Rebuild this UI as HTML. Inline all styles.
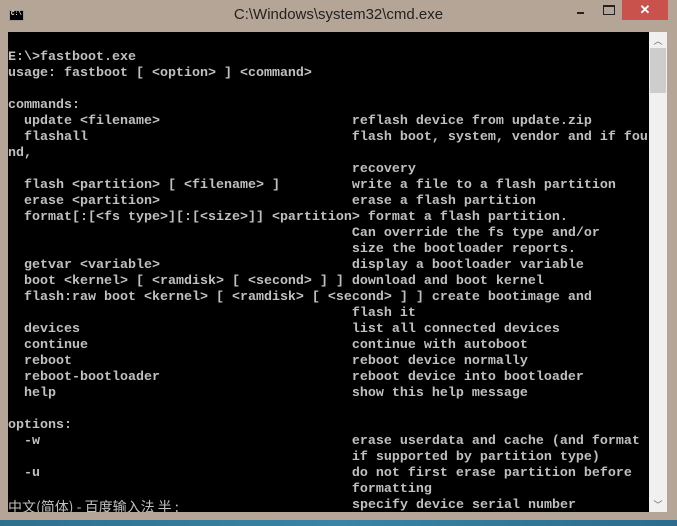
<!DOCTYPE html>
<html><head><meta charset="utf-8"><style>
html,body{margin:0;padding:0;width:677px;height:526px;overflow:hidden;background:#b5a596;}
.title{position:absolute;left:0;top:0;width:677px;height:32px;background:#b5a596;}
.ttl{position:absolute;left:0;width:677px;top:6px;text-align:center;font:15px "Liberation Sans",sans-serif;color:#222;}
.ico{position:absolute;left:9px;top:10px;width:15px;height:11px;background:#000;border:1px solid #999;box-sizing:border-box;}
.ico:after{content:"C:\\";position:absolute;left:1px;top:-1px;font:bold 6px "Liberation Mono",monospace;color:#fff;}
.close{position:absolute;left:622px;top:0;width:46px;height:20px;background:#c9524c;color:#fff;font:bold 13px "Liberation Sans",sans-serif;text-align:center;line-height:20px;}
.min{position:absolute;left:577px;top:12px;width:7px;height:2px;background:#222;}
.max{position:absolute;left:603px;top:5px;width:10px;height:7px;border:1px solid #222;border-top-width:2px;}
.con{position:absolute;left:8px;top:32px;width:641px;height:480px;background:#000;overflow:hidden;}
pre{margin:0;padding-top:2px;font:bold 13.33px/16px "Liberation Mono","Noto Sans CJK SC",monospace;color:#c0c0c0;letter-spacing:0;}
.sb{position:absolute;left:649px;top:32px;width:18px;height:480px;background:#f0f0f0;}
.thumb{position:absolute;left:1px;top:16px;width:16px;height:45px;background:#cdcdcd;}
.up,.dn{position:absolute;left:0;width:18px;text-align:center;font:9px "Liberation Sans",sans-serif;color:#666;}
.up{top:2px}.dn{top:466px}
.desk{position:absolute;left:0;top:520px;width:677px;height:6px;background:linear-gradient(90deg,#2f6f8e,#3a84a6,#2c6b8b);}
.ime{display:inline-block;width:344px;height:16px;line-height:16px;vertical-align:top;overflow:hidden;font-weight:normal;font-family:"Noto Sans CJK SC",sans-serif;font-size:14px;position:relative;top:1px;}
</style></head><body>
<div class="title"><div class="ico"></div><div class="ttl">C:\Windows\system32\cmd.exe</div>
<div class="min"></div><div class="max"></div><div class="close">✕</div></div>
<div class="con"><pre>

E:\&gt;fastboot.exe
usage: fastboot [ &lt;option&gt; ] &lt;command&gt;

commands:
  update &lt;filename&gt;                        reflash device from update.zip
  flashall                                 flash boot, system, vendor and if fou
nd,
                                           recovery
  flash &lt;partition&gt; [ &lt;filename&gt; ]         write a file to a flash partition
  erase &lt;partition&gt;                        erase a flash partition
  format[:[&lt;fs type&gt;][:[&lt;size&gt;]] &lt;partition&gt; format a flash partition.
                                           Can override the fs type and/or
                                           size the bootloader reports.
  getvar &lt;variable&gt;                        display a bootloader variable
  boot &lt;kernel&gt; [ &lt;ramdisk&gt; [ &lt;second&gt; ] ] download and boot kernel
  flash:raw boot &lt;kernel&gt; [ &lt;ramdisk&gt; [ &lt;second&gt; ] ] create bootimage and
                                           flash it
  devices                                  list all connected devices
  continue                                 continue with autoboot
  reboot                                   reboot device normally
  reboot-bootloader                        reboot device into bootloader
  help                                     show this help message

options:
  -w                                       erase userdata and cache (and format
                                           if supported by partition type)
  -u                                       do not first erase partition before
                                           formatting
<span class="ime">中文(简体) - 百度输入法 半 :</span>specify device serial number</pre></div>
<div class="sb"><div class="up">︿</div><div class="thumb"></div><div class="dn">﹀</div></div>
<div class="desk"></div>
</body></html>
